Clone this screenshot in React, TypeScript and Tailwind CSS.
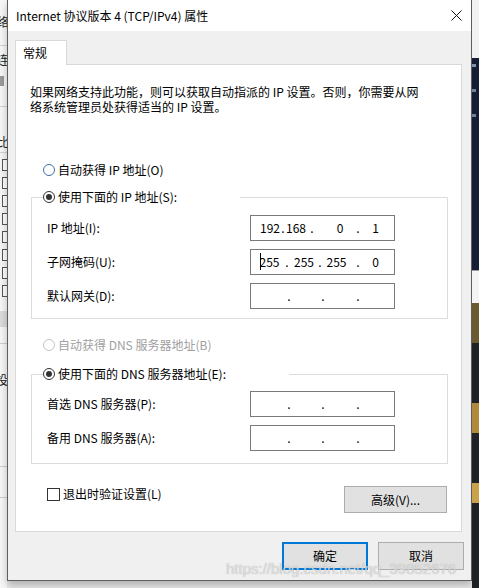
import React from "react";

const FONT = "font-['Noto_Sans_CJK_SC','Noto_Sans',sans-serif]";

function Radio({ checked = false, variant = "normal" }: { checked?: boolean; variant?: "normal" | "hover" | "disabled" }) {
  const border =
    variant === "hover" ? "border-[#3d6fa6]" : variant === "disabled" ? "border-[#c4c4c4]" : "border-[#333333]";
  return (
    <span className={`w-[12px] h-[12px] shrink-0 rounded-full border ${border} bg-white flex items-center justify-center`}>
      {checked && <span className="w-[6px] h-[6px] rounded-full bg-[#333333]" />}
    </span>
  );
}

type Seg = { t: string; cls: string; caret?: boolean };

function IpBox({ segs }: { segs: Seg[] }) {
  return (
    <div className="w-[145px] h-[26px] shrink-0 border border-[#7a7a7a] bg-white flex items-center text-[12px] leading-none text-black">
      {segs.map((s, i) => (
        <span key={i} className={`${s.cls} text-center flex items-center justify-center relative`}>
          {s.caret && <span className="absolute left-0 top-[-3px] w-px h-[17px] bg-black" />}
          {s.t}
        </span>
      ))}
    </div>
  );
}

const BOX_IP: Seg[] = [
  { t: "192", cls: "ml-[10px] w-[18px]" },
  { t: ".", cls: "ml-[1px] w-[6px]" },
  { t: "168", cls: "ml-[1px] w-[18px]" },
  { t: ".", cls: "ml-[4px] w-[6px]" },
  { t: "0", cls: "ml-[21px] w-[8px]" },
  { t: ".", cls: "ml-[11px] w-[6px]" },
  { t: "1", cls: "ml-[10px] w-[9px]" },
];

const BOX_MASK: Seg[] = [
  { t: "255", cls: "ml-[9px] w-[19px]", caret: true },
  { t: ".", cls: "ml-[5px] w-[6px]" },
  { t: "255", cls: "ml-[5px] w-[18px]" },
  { t: ".", cls: "ml-[4px] w-[6px]" },
  { t: "255", cls: "ml-[4px] w-[19px]" },
  { t: ".", cls: "ml-[9px] w-[6px]" },
  { t: "0", cls: "ml-[10px] w-[9px]" },
];

const BOX_EMPTY: Seg[] = [
  { t: ".", cls: "ml-[35px] w-[6px]" },
  { t: ".", cls: "ml-[28px] w-[6px]" },
  { t: ".", cls: "ml-[29px] w-[6px]" },
];

function Row({ label, segs }: { label: string; segs: Seg[] }) {
  return (
    <div className="flex items-center h-[26px]">
      <span className="w-[203px] shrink-0 text-[12px] leading-none">{label}</span>
      <IpBox segs={segs} />
    </div>
  );
}

function LeftStrip() {
  return (
    <div className="w-[7px] h-[588px] shrink-0 overflow-hidden bg-[#f7f7f7] flex flex-col text-[12px] leading-none text-[#222]">
      <div className="h-[16px]" />
      <span className="ml-[-3px]">络</span>
      <div className="mt-[17px] h-px bg-[#d4d4d4]" />
      <span className="mt-[8px] ml-[-3px]">连</span>
      <div className="mt-[10px] h-[10px] w-[4px] bg-[#9a9a9a]" />
      <div className="mt-[20px] h-px bg-[#d4d4d4]" />
      <span className="mt-[29px] ml-[-3px]">比</span>
      <div className="mt-[4px] h-px bg-[#d4d4d4]" />
      {[0, 1, 2, 3, 4, 5, 6, 7].map((i) => (
        <div key={i} className="mt-[6px] h-[12px] w-[6px] border border-[#555] bg-white ml-[2px]" />
      ))}
      <div className="mt-[14px] h-[16px] bg-[#dcdcdc]" />
      <div className="mt-[16px] h-px bg-[#cfcfcf]" />
      <span className="mt-[30px] ml-[-4px]">投</span>
      <div className="mt-[80px] h-px bg-[#cfcfcf]" />
      <div className="mt-[30px] h-px bg-[#cfcfcf]" />
    </div>
  );
}

function RightStrip() {
  return (
    <div className="w-[7px] h-[588px] shrink-0 overflow-hidden flex flex-col">
      <div className="h-[58px] bg-[#f2f2f2]" />
      <div className="h-[212px] bg-[#141d33] flex flex-col">
        <div className="mt-[6px] h-[3px] w-[4px] bg-[#8090b0]" />
        <div className="mt-[22px] h-[3px] w-[4px] bg-[#7080a0]" />
        <div className="mt-[22px] h-[3px] w-[4px] bg-[#7080a0]" />
      </div>
      <div className="h-[33px] bg-[#f4f4f4] border-t border-[#999]" />
      <div className="flex-1 bg-[#1e2226] flex flex-col">
        <div className="h-[40px] bg-[#6b5a2e]" />
        <div className="mt-[60px] h-[30px] bg-[#b08a3a]" />
        <div className="mt-[50px] h-[20px] bg-[#c9a24a]" />
      </div>
    </div>
  );
}

export default function App() {
  return (
    <div className={`${FONT} w-[479px] h-[588px] flex overflow-hidden relative bg-[#e9e9e9] text-black`}>
      <LeftStrip />
      <div className="w-[465px] h-[581px] shrink-0 flex flex-col bg-[#f0f0f0] border-x border-b border-[#5e5e5e] shadow-[0_4px_8px_rgba(0,0,0,0.25)]">
        {/* Title bar */}
        <div className="h-[31px] bg-white flex items-center justify-between pl-[8px] pr-[9px]">
          <span className="text-[12px] leading-none">Internet 协议版本 4 (TCP/IPv4) 属性</span>
          <svg width="11" height="11" viewBox="0 0 11 11" className="block">
            <path d="M0.5 0.5 L10.5 10.5 M10.5 0.5 L0.5 10.5" stroke="#111" strokeWidth="1" fill="none" />
          </svg>
        </div>

        {/* Body */}
        <div className="flex-1 flex flex-col pt-[9px]">
          <div className="ml-[7px] w-[52px] h-[25px] -mb-px relative z-10 bg-white border border-b-0 border-[#d9d9d9] flex items-center pl-[7px] text-[12px] leading-none">
            常规
          </div>
          <div className="ml-[7px] w-[447px] h-[468px] border border-[#d9d9d9] bg-white flex flex-col text-[12px]">
            <div className="pl-[14px] pt-[19px] leading-[15px]">
              <div>如果网络支持此功能，则可以获取自动指派的 IP 设置。否则，你需要从网</div>
              <div>络系统管理员处获得适当的 IP 设置。</div>
            </div>

            <div className="mt-[48px] ml-[27px] h-[16px] flex items-center gap-[3px] leading-none">
              <Radio variant="hover" />
              <span>自动获得 IP 地址(O)</span>
            </div>

            <fieldset className="mt-[11px] ml-[15px] w-[417px] border border-[#dcdcdc]">
              <legend className="ml-[11px] w-[197px] h-[16px] flex items-center gap-[3px] leading-none">
                <Radio checked />
                <span>使用下面的 IP 地址(S):</span>
              </legend>
              <div className="pl-[15px] pt-[10px] pb-[9px] flex flex-col gap-[8px]">
                <Row label="IP 地址(I):" segs={BOX_IP} />
                <Row label="子网掩码(U):" segs={BOX_MASK} />
                <Row label="默认网关(D):" segs={BOX_EMPTY} />
              </div>
            </fieldset>

            <div className="mt-[18px] ml-[27px] h-[16px] flex items-center gap-[3px] leading-none text-[#a0a0a0]">
              <Radio variant="disabled" />
              <span>自动获得 DNS 服务器地址(B)</span>
            </div>

            <fieldset className="mt-[13px] ml-[15px] w-[417px] border border-[#dcdcdc]">
              <legend className="ml-[11px] w-[246px] h-[16px] flex items-center gap-[3px] leading-none">
                <Radio checked />
                <span>使用下面的 DNS 服务器地址(E):</span>
              </legend>
              <div className="pl-[15px] pt-[9px] pb-[12px] flex flex-col gap-[8px]">
                <Row label="首选 DNS 服务器(P):" segs={BOX_EMPTY} />
                <Row label="备用 DNS 服务器(A):" segs={BOX_EMPTY} />
              </div>
            </fieldset>

            <div className="mt-[22px] flex items-start justify-between pl-[31px] pr-[14px]">
              <div className="h-[16px] flex items-center gap-[3px] leading-none">
                <span className="w-[13px] h-[13px] border border-[#333] bg-white" />
                <span>退出时验证设置(L)</span>
              </div>
              <div className="w-[103px] h-[27px] bg-[#e1e1e1] border border-[#adadad] flex items-center justify-center leading-none">
                高级(V)...
              </div>
            </div>
          </div>

          <div className="mt-[10px] flex justify-end gap-[10px] pr-[7px] text-[12px] leading-none">
            <div className="w-[86px] h-[28px] bg-[#e1e1e1] border-2 border-[#0078d7] flex items-center justify-center">确定</div>
            <div className="w-[86px] h-[28px] bg-[#e1e1e1] border border-[#adadad] flex items-center justify-center">取消</div>
          </div>
        </div>
      </div>
      <RightStrip />

      <div className="absolute left-[226px] top-[561px] text-[15px] leading-none font-['Liberation_Sans',sans-serif] text-[rgba(235,235,235,0.75)] [text-shadow:0_0_1px_rgba(120,120,120,0.6)] pointer-events-none">
        https://blog.csdn.net/qq_39852676
      </div>
    </div>
  );
}
